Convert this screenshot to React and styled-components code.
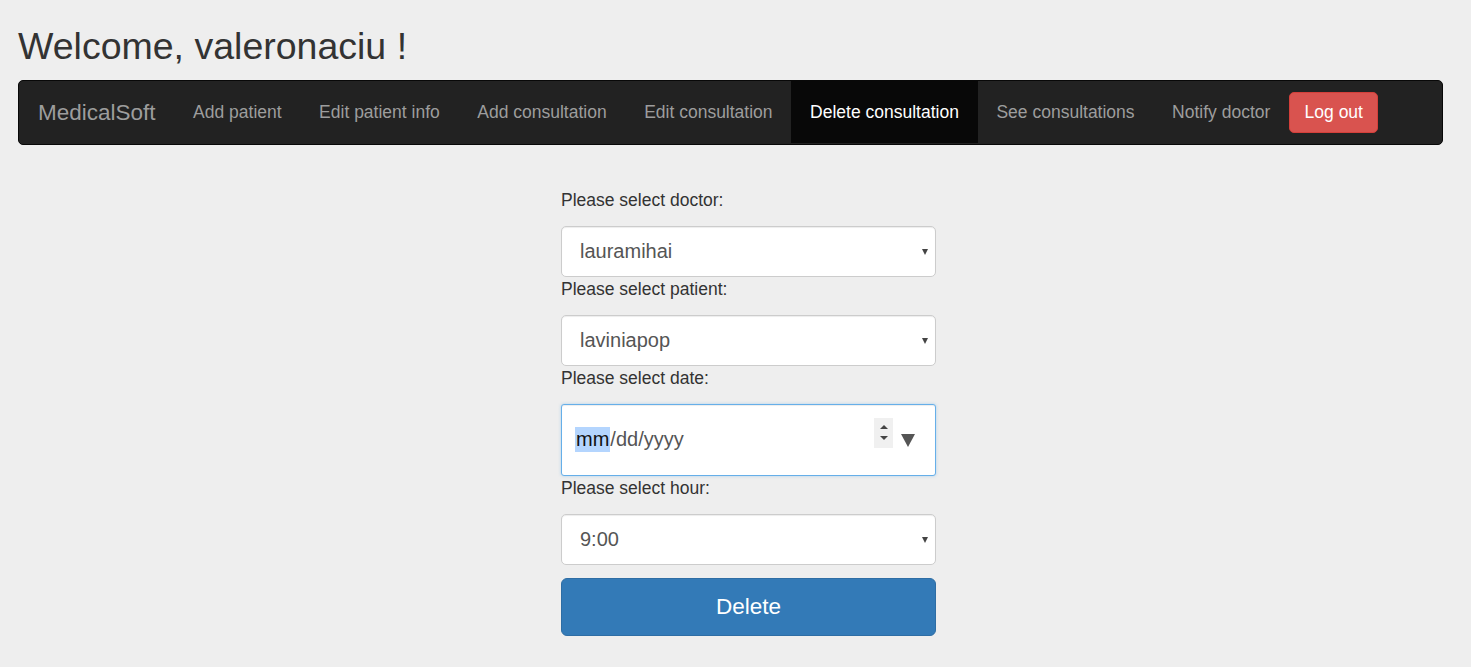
import React from 'react'
import styled, { createGlobalStyle } from 'styled-components'

const GlobalStyle = createGlobalStyle`
  html, body {
    margin: 0;
    padding: 0;
    background: #eeeeee;
    font-family: "Liberation Sans", Arial, sans-serif;
    color: #333333;
  }
`

const Page = styled.div`
  padding: 26px 28px 0 18px;
`

const Title = styled.h2`
  margin: 0 0 13px 0;
  font-size: 37.5px;
  font-weight: 400;
  line-height: 41px;
  color: #333333;
`

const Navbar = styled.nav`
  display: flex;
  align-items: stretch;
  height: 63px;
  background: #222222;
  border: 1px solid #080808;
  border-radius: 5px;
`

const Brand = styled.div`
  display: flex;
  align-items: center;
  padding: 0 18.75px 0 19px;
  font-size: 22.5px;
  color: #9d9d9d;
`

const NavLink = styled.a`
  display: flex;
  align-items: center;
  padding: 0 18.75px;
  font-size: 17.5px;
  color: ${(p) => (p.$active ? '#ffffff' : '#9d9d9d')};
  background: ${(p) => (p.$active ? '#080808' : 'transparent')};
  margin-bottom: ${(p) => (p.$active ? '1px' : '0')};
  text-decoration: none;
  cursor: pointer;
`

const LogoutButton = styled.button`
  align-self: center;
  height: 41px;
  padding: 0 14.5px;
  font-family: inherit;
  font-size: 17.5px;
  color: #ffffff;
  background: #d9534f;
  border: 1px solid #d43f3a;
  border-radius: 5px;
  cursor: pointer;
`

const FormArea = styled.div`
  display: flex;
  justify-content: center;
  padding-left: 36px;
  margin-top: 43px;
`

const Form = styled.form`
  width: 375px;
  display: flex;
  flex-direction: column;
`

const Label = styled.label`
  display: block;
  font-size: 17.5px;
  line-height: 25px;
  margin-bottom: 12.5px;
  color: #333333;
`

const SelectWrap = styled.div`
  position: relative;
  &::after {
    content: '';
    position: absolute;
    right: 8px;
    top: 50%;
    margin-top: -2px;
    border-left: 3.5px solid transparent;
    border-right: 3.5px solid transparent;
    border-top: 6px solid #444444;
    pointer-events: none;
  }
`

const Select = styled.select`
  appearance: none;
  width: 100%;
  height: 51.5px;
  padding: 0 18px;
  font-family: inherit;
  font-size: 20px;
  color: #555555;
  background: #ffffff;
  border: 1px solid #cccccc;
  border-radius: 5px;
  box-shadow: inset 0 1px 1px rgba(0, 0, 0, 0.075);
  outline: none;
`

const DateField = styled.div`
  box-sizing: border-box;
  height: 72.5px;
  display: flex;
  align-items: center;
  padding: 0 18px 0 13px;
  background: #ffffff;
  border: 1px solid #66afe9;
  border-radius: 3px;
  box-shadow: inset 0 1px 1px rgba(0, 0, 0, 0.075), 0 0 3px rgba(102, 175, 233, 0.5);
  font-size: 20px;
  color: #555555;
`

const DateText = styled.span`
  flex: 1;
`

const Segment = styled.span`
  background: #b4d5fe;
  color: #111111;
  padding: 1px 1px 2px;
`

const Spinner = styled.div`
  width: 19px;
  height: 30px;
  background: #f0f0f0;
  display: flex;
  flex-direction: column;
  align-items: center;
  justify-content: center;
  gap: 7px;
  margin-top: -14px;
  margin-right: 8px;
`

const Arrow = styled.span`
  width: 0;
  height: 0;
  border-left: 4px solid transparent;
  border-right: 4px solid transparent;
  ${(p) => (p.$up ? 'border-bottom: 4px solid #444;' : 'border-top: 4px solid #444;')}
`

const DropArrow = styled.span`
  width: 0;
  height: 0;
  margin-right: 2px;
  border-left: 7px solid transparent;
  border-right: 7px solid transparent;
  border-top: 13px solid #555555;
  margin-top: 2px;
`

const Gap = styled.div`
  height: 12.5px;
`

const DeleteButton = styled.button`
  height: 58px;
  font-family: inherit;
  font-size: 22.5px;
  color: #ffffff;
  background: #337ab7;
  border: 1px solid #2e6da4;
  border-radius: 6px;
  cursor: pointer;
`

const links = [
  'Add patient',
  'Edit patient info',
  'Add consultation',
  'Edit consultation',
  'Delete consultation',
  'See consultations',
  'Notify doctor',
]

export default function App() {
  return (
    <Page>
      <GlobalStyle />
      <Title>Welcome, valeronaciu !</Title>
      <Navbar>
        <Brand>MedicalSoft</Brand>
        {links.map((l) => (
          <NavLink key={l} $active={l === 'Delete consultation'}>
            {l}
          </NavLink>
        ))}
        <LogoutButton>Log out</LogoutButton>
      </Navbar>
      <FormArea>
        <Form onSubmit={(e) => e.preventDefault()}>
          <Label>Please select doctor:</Label>
          <SelectWrap>
            <Select defaultValue="lauramihai">
              <option>lauramihai</option>
            </Select>
          </SelectWrap>
          <Label>Please select patient:</Label>
          <SelectWrap>
            <Select defaultValue="laviniapop">
              <option>laviniapop</option>
            </Select>
          </SelectWrap>
          <Label>Please select date:</Label>
          <DateField>
            <DateText>
              <Segment>mm</Segment>/dd/yyyy
            </DateText>
            <Spinner>
              <Arrow $up />
              <Arrow />
            </Spinner>
            <DropArrow />
          </DateField>
          <Label>Please select hour:</Label>
          <SelectWrap>
            <Select defaultValue="9:00">
              <option>9:00</option>
            </Select>
          </SelectWrap>
          <Gap />
          <DeleteButton type="submit">Delete</DeleteButton>
        </Form>
      </FormArea>
    </Page>
  )
}
